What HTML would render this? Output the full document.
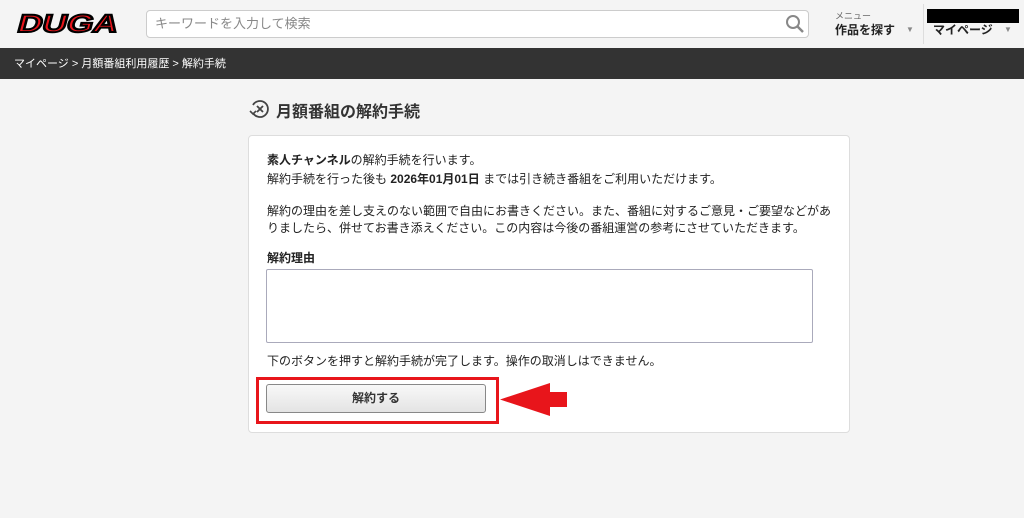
<!DOCTYPE html><html><head><meta charset="utf-8"><style>
body{margin:0;width:1024px;height:518px;background:#f4f4f4;font-family:"Liberation Sans","Noto Sans CJK JP",sans-serif;color:#222;overflow:hidden;position:relative}
.a{position:absolute}
.t{font-size:12px;line-height:17px;white-space:nowrap}
</style></head><body>
<div class="a" style="left:0;top:0;width:1024px;height:48px;background:#f4f4f4"></div>
<svg class="a" style="left:12px;top:10px" width="112" height="26" viewBox="0 0 112 26">
<g transform="skewX(-15)" fill="#e8151b" stroke="#000" stroke-width="2">
<text x="10" y="22" font-family="Liberation Sans" font-weight="bold" font-style="normal" font-size="25" textLength="100" lengthAdjust="spacingAndGlyphs">DUGA</text></g></svg>
<div class="a" style="left:146px;top:10px;width:663px;height:28px;background:#fff;border:1px solid #ccc;border-radius:4px;box-sizing:border-box"></div>
<div class="a t" style="left:155px;top:15px;font-size:13px;color:#888">キーワードを入力して検索</div>
<svg class="a" style="left:785px;top:14px" width="20" height="20"><circle cx="8" cy="8" r="6" fill="none" stroke="#888" stroke-width="2"/><line x1="12.5" y1="12.5" x2="18" y2="18" stroke="#888" stroke-width="2.5"/></svg>
<div class="a" style="left:835px;top:9px;font-size:9px;color:#666">メニュー</div>
<div class="a t" style="left:835px;top:22px;font-weight:bold;font-size:12px">作品を探す</div>
<div class="a" style="left:906px;top:25px;font-size:8px;color:#888">▼</div>
<div class="a" style="left:923px;top:4px;width:1px;height:40px;background:#ddd"></div>
<div class="a" style="left:927px;top:9px;width:92px;height:14px;background:#000"></div>
<div class="a t" style="left:933px;top:22px;font-weight:bold">マイページ</div>
<div class="a" style="left:1004px;top:25px;font-size:8px;color:#888">▼</div>
<div class="a" style="left:0;top:48px;width:1024px;height:31px;background:#333"></div>
<div class="a t" style="left:14px;top:56px;color:#fff;font-size:11px">マイページ &gt; 月額番組利用履歴 &gt; 解約手続</div>
<svg class="a" style="left:249px;top:98px" width="22" height="22" viewBox="0 0 22 22"><path d="M4 7 A8 8 0 1 1 4 15" fill="none" stroke="#444" stroke-width="1.8"/><path d="M1 13 L4 16 L7 13" fill="none" stroke="#444" stroke-width="1.6"/><path d="M8 8 L14 14 M14 8 L8 14" stroke="#444" stroke-width="1.8"/></svg>
<div class="a" style="left:276px;top:98px;font-size:16px;font-weight:bold;color:#333">月額番組の解約手続</div>
<div class="a" style="left:248px;top:135px;width:602px;height:298px;background:#fff;border:1px solid #ddd;border-radius:4px;box-sizing:border-box"></div>
<div class="a t" style="left:267px;top:152px"><b>素人チャンネル</b>の解約手続を行います。</div>
<div class="a t" style="left:267px;top:171px">解約手続を行った後も <b>2026年01月01日</b> までは引き続き番組をご利用いただけます。</div>
<div class="a t" style="left:267px;top:203px">解約の理由を差し支えのない範囲で自由にお書きください。また、番組に対するご意見・ご要望などがあ</div>
<div class="a t" style="left:267px;top:220px">りましたら、併せてお書き添えください。この内容は今後の番組運営の参考にさせていただきます。</div>
<div class="a t" style="left:267px;top:250px;font-weight:bold">解約理由</div>
<div class="a" style="left:266px;top:269px;width:547px;height:74px;border:1px solid #aab;border-radius:2px;box-sizing:border-box"></div>
<div class="a t" style="left:267px;top:353px">下のボタンを押すと解約手続が完了します。操作の取消しはできません。</div>
<div class="a" style="left:256px;top:377px;width:243px;height:47px;border:3px solid #e8151b;box-sizing:border-box"></div>
<div class="a" style="left:266px;top:384px;width:220px;height:29px;border:1px solid #888;border-radius:3px;background:linear-gradient(#f8f8f8,#e4e4e4);box-sizing:border-box;text-align:center;line-height:27px;font-size:12px;font-weight:bold;color:#333">解約する</div>
<svg class="a" style="left:500px;top:383px" width="68" height="33"><path d="M0 16.5 L50 0 L50 9 L67 9 L67 24 L50 24 L50 33 Z" fill="#e8151b"/></svg>
</body></html>
